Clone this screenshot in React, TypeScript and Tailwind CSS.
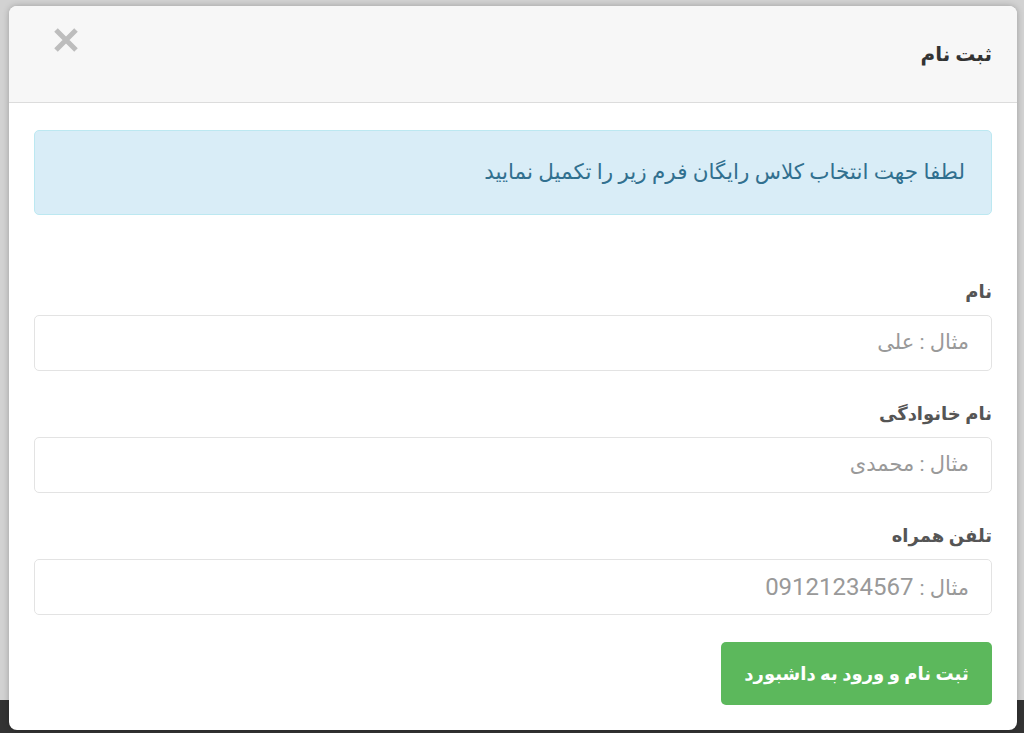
import React from "react";

const font = { fontFamily: 'Roboto, "DejaVu Sans", "Noto Sans", sans-serif' };

function Field({ label, placeholder, digits }: { label: string; placeholder: string; digits?: string }) {
  return (
    <div className="flex flex-col">
      <label className="text-[18px] font-bold text-[#555] leading-[26px] mb-[10px]">{label}</label>
      <div className="h-[56px] border border-[#e3e3e3] rounded-[5px] flex items-center px-[22px] text-[21px] text-[#999]">
        <span>
          {placeholder}
          {digits && <span className="text-[24px]"> {digits}</span>}
        </span>
      </div>
    </div>
  );
}

export default function App() {
  return (
    <div className="w-[1024px] h-[733px] overflow-hidden bg-[#d2d2d2] relative" style={font} dir="rtl">
      <div className="absolute left-0 right-0 bottom-0 h-[33px] bg-[#333]" />
      <div className="absolute left-[9px] right-[7px] top-[6px] h-[724px] bg-white rounded-[8px] shadow-[0_0_6px_rgba(0,0,0,0.25)] flex flex-col overflow-hidden">
        <div className="h-[97px] bg-[#f7f7f7] border-b border-[#dcdcdc] flex items-center justify-between pr-[25px] pl-[44px] shrink-0">
          <h2 className="text-[20px] font-bold text-[#333] leading-none">ثبت نام</h2>
          <svg width="26" height="24" viewBox="0 0 26 24" className="-mt-[28px]">
            <path d="M3 2 L23 22 M23 2 L3 22" stroke="#bdbdbd" strokeWidth="5" strokeLinecap="butt" />
          </svg>
        </div>
        <div className="px-[25px] pt-[27px] flex flex-col">
          <div className="h-[85px] bg-[#d9edf7] border border-[#bce8f1] rounded-[5px] flex items-center px-[26px] text-[21.5px] text-[#31708f]">
            لطفا جهت انتخاب کلاس رایگان فرم زیر را تکمیل نمایید
          </div>
          <div className="mt-[64px] flex flex-col gap-[30px]">
            <Field label="نام" placeholder="مثال : علی" />
            <Field label="نام خانوادگی" placeholder="مثال : محمدی" />
            <Field label="تلفن همراه" placeholder="مثال :" digits="09121234567" />
          </div>
          <div className="mt-[27px] flex">
            <button className="h-[63px] w-[271px] bg-[#5cb85c] rounded-[5px] text-white text-[18px] font-bold">
              ثبت نام و ورود به داشبورد
            </button>
          </div>
        </div>
      </div>
    </div>
  );
}
